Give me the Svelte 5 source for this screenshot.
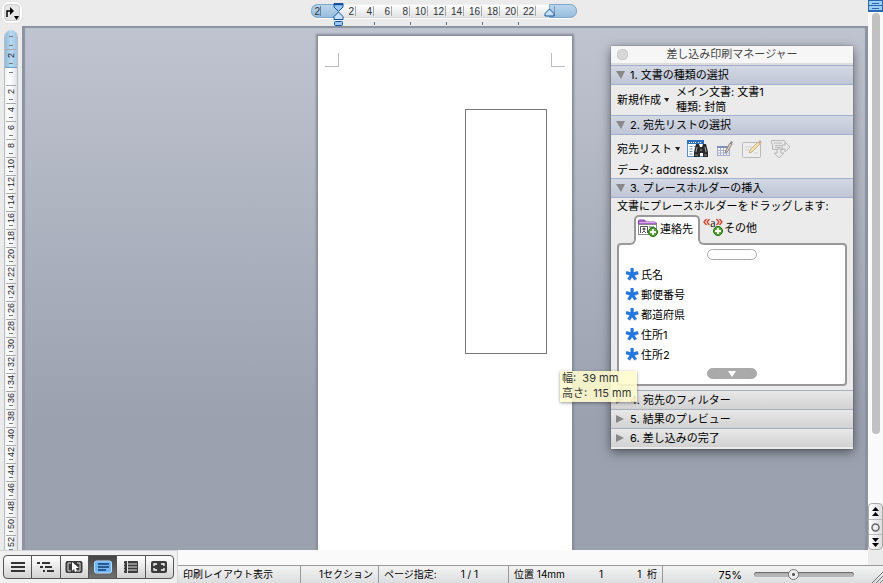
<script>
  const columns = [2, 4, 6, 8, 10, 12, 14, 16, 18, 20, 22];
  const tabStops = [4, 8, 12, 16, 20];
  const lines = Array.from({ length: 26 }, (_, i) => (i + 1) * 2);
  const fields = ["氏名", "郵便番号", "都道府県", "住所1", "住所2"];
  const closedSteps = ["4. 宛先のフィルター", "5. 結果のプレビュー", "6. 差し込みの完了"];

  let zoom = $state(38);
  let view = $state("print");
</script>

{#snippet plus()}
  <circle cx="15" cy="14" r="4.500" fill="#4fa92f" stroke="#246b12" />
  <path d="M15 11v6M12 14h6" stroke="#fff" stroke-width="2" />
{/snippet}

<div class="window">
  <div class="upper">
    <div class="workspace">
      <header class="top-bar">
        <button class="tab-button" aria-label="タブ">
          <svg width="16" height="16" viewBox="0 0 16 16">
            <path d="M3 12V6h4" fill="none" stroke="#000" stroke-width="1.5" />
            <path d="M6 2l4 4-4 4z" />
            <path d="M10 11h5l-2.5 4z" />
          </svg>
        </button>
        <div class="ruler-area">
          <div class="ruler">
            <div class="margin-left"><span>2</span></div>
            {#each columns as n}
              <div class="col">
                <span>{n}</span>
                {#if tabStops.includes(n - 2)}<i></i>{/if}
              </div>
            {/each}
            <div class="col-rest"></div>
            <div class="margin-right"><i></i></div>
            <svg class="indent" width="11" height="23" viewBox="0 0 11 23">
              <g fill="#9cc8f5" stroke="#17509c">
                <path d="M1 .5h9v3.500L5.500 8.500 1 4z" />
                <path d="M5.500 9L10 13.500v3H1v-3z" fill="#c5e0fa" />
                <rect x="1.500" y="18.500" width="8" height="4" rx="1" />
              </g>
              <path d="M1 1.500h9" stroke="#17509c" stroke-width="1.500" />
            </svg>
            <svg class="indent-right" width="11" height="9" viewBox="0 0 11 9">
              <path d="M5.500 1L10 5.500v2.500H1V5.500z" fill="#c5e0fa" stroke="#17509c" />
            </svg>
          </div>
        </div>
      </header>

      <div class="body">
        <div class="vruler">
          <div class="vtrack">
            <div class="vmargin">
              <b></b><b></b>
              <div class="row"><span>2</span><b></b></div>
            </div>
            <div class="vgap"><b></b></div>
            {#each lines as n}
              <div class="row"><span>{n}</span><b></b></div>
            {/each}
          </div>
        </div>

        <main class="canvas">
          <div class="page">
            <div class="corner left"></div>
            <div class="corner right"></div>
            <div class="text-box"></div>
          </div>

          <section class="panel">
            <div class="title">
              <button class="close" aria-label="閉じる"></button>
              <span>差し込み印刷マネージャー</span>
            </div>

            <button class="step open">1. 文書の種類の選択</button>
            <div class="doc-type">
              <button class="menu">新規作成<i></i></button>
              <p>メイン文書: 文書1<br />種類: 封筒</p>
            </div>

            <button class="step open">2. 宛先リストの選択</button>
            <div class="recipients">
              <div class="tools">
                <button class="menu">宛先リスト<i></i></button>
                <button aria-label="リストを開く">
                  <svg width="22" height="20" viewBox="0 0 22 20">
                    <rect x=".5" y="1.500" width="16" height="16" fill="#fff" stroke="#5b8fc4" />
                    <path d="M0 1h17v4H0z" fill="#2c70bd" />
                    <path d="M2 3.500h3M6 3.500h3M11 3.500h4" stroke="#fff" stroke-dasharray="1 1" />
                    <path d="M2.500 7.500h3M2.500 10h3M2.500 12.500h3M2.500 15h3M7 7.500h2" stroke="#5a9bd2" />
                    <path d="M9 5h3l1 3h2l1-3h3l2 8v5h-5v-4h-3v4H7v-5z" fill="#2a2a2a" />
                    <path d="M10 8l-1 5M18 8l1 5M13 11h2" stroke="#a0a0a0" />
                    <path d="M8 16h3M17 16h3" stroke="#888" />
                  </svg>
                </button>
                <button aria-label="データの編集">
                  <svg width="18" height="18" viewBox="0 0 18 18">
                    <rect x="1.500" y="6.500" width="12" height="9" fill="#f5f6f9" stroke="#a3abc4" />
                    <path d="M1 6h13v2H1z" fill="#8290b7" />
                    <path d="M4.500 8v8M7.500 8v8M10.500 8v8M1 10.500h13M1 13h13" stroke="#a9b2cc" />
                    <path d="M9 13l1-3 4-7 2 1-4 7z" fill="#e0d3b8" stroke="#8b8780" />
                    <path d="M14 3l1-2 2 1-1 2z" fill="#888" />
                  </svg>
                </button>
                <button aria-label="レコードの編集">
                  <svg width="22" height="20" viewBox="0 0 22 20">
                    <rect x="1.500" y="3.500" width="18" height="15" rx="1" fill="#eee" stroke="#b9b9b9" />
                    <path d="M4 8h7M4 11h4M13 14h4" stroke="#d2d2d2" />
                    <path d="M8 14l1-3 8-8 2 2-8 8z" fill="#f2dcae" stroke="#c9b48b" />
                    <path d="M17 3l2-2 2 2-2 2z" fill="#c9afa9" />
                  </svg>
                </button>
                <button aria-label="差し込み先">
                  <svg width="21" height="20" viewBox="0 0 21 20" fill="#e8e8e8" stroke="#b8b8b8">
                    <path d="M1.500 1.500h13q2 2 0 4v5h-12v-5q-2-2-1-4z" />
                    <path d="M4 4h8M5 6.500h6M5 8.500h6" />
                    <path d="M12 6h3V3l5 5-5 5v-3h-3z" />
                    <path d="M7 10h4v4h3l-5 5-5-5h3z" />
                  </svg>
                </button>
              </div>
              <p>データ: address2.xlsx</p>
            </div>

            <button class="step open">3. プレースホルダーの挿入</button>
            <div class="placeholders">
              <p>文書にプレースホルダーをドラッグします:</p>
              <div class="tabs">
                <button class="active">
                  <svg width="21" height="20" viewBox="0 0 21 20">
                    <path d="M.5 7V3q0-1 1-1h5l2 2h8q2 0 2 2v1z" fill="#a964cc" stroke="#8d45ad" />
                    <rect x=".5" y="6.500" width="18" height="10" fill="#fff" stroke="#8a8a8a" />
                    <path d="M1.500 4.500h16" stroke="#d9b0ee" />
                    <path d="M2.500 15V8.500h7V15M4 15l2-2 2 2M11 9h5M11 11.500h3" fill="none" stroke="#555" />
                    <circle cx="6" cy="11" r="1.500" fill="#555" />
                    {@render plus()}
                  </svg>
                  連絡先
                </button>
                <button>
                  <svg width="21" height="20" viewBox="0 0 21 20">
                    <path d="M3.500 2L1 5l2.500 3M6.500 2L4 5l2.500 3M13.500 2L16 5l-2.500 3M16.500 2L19 5l-2.500 3" fill="none" stroke="#d4432a" stroke-width="1.300" />
                    {@render plus()}
                  </svg>
                  <em>a</em>
                  その他
                </button>
              </div>
              <div class="list">
                <button class="pill" aria-label="上へ"></button>
                <ul>
                  {#each fields as field}
                    <li>
                      <svg width="14" height="14" viewBox="0 0 14 14">
                        <path d="M7.500 8V2M7.500 8l6-2M7.500 8l3.500 5M7.500 8L4 13M7.500 8L2 6" stroke="#b9bcc3" stroke-width="3" />
                        <path d="M7 7.500V1M7 7.500l6-2M7 7.500l3.500 5M7 7.500l-3.500 5M7 7.500l-6-2" stroke="#2377e2" stroke-width="3" />
                      </svg>
                      {field}
                    </li>
                  {/each}
                </ul>
                <button class="pill down" aria-label="下へ"></button>
              </div>
            </div>

            {#each closedSteps as step}
              <button class="step">{step}</button>
            {/each}
          </section>

          <div class="size-tip">幅:&nbsp; 39 mm<br />高さ:&nbsp; 115 mm</div>
        </main>
      </div>
    </div>

    <div class="scroll">
      <button class="split" aria-label="分割"><i></i><i></i></button>
      <div class="track"><div class="thumb"></div></div>
      <div class="browse">
        <button aria-label="前のページ">
          <svg width="9" height="10" viewBox="0 0 9 10"><path d="M4.500 0L8 4H1zM4.500 5L8 9H1z" /></svg>
        </button>
        <button aria-label="オブジェクトの選択">
          <svg width="9" height="9" viewBox="0 0 9 9"><circle cx="4.500" cy="4.500" r="3.500" fill="#eee" stroke="#666" stroke-width="1.500" /></svg>
        </button>
        <button aria-label="次のページ">
          <svg width="9" height="10" viewBox="0 0 9 10"><path d="M1 1h7L4.500 5zM1 6h7l-3.500 4z" /></svg>
        </button>
      </div>
    </div>
  </div>

  <footer>
    <div class="views">
      <div class="group">
        <button aria-label="下書き" class:on={view === "draft"} onclick={() => (view = "draft")}>
          <svg width="16" height="14" viewBox="0 0 16 14"><path d="M1 3h14M1 7h14M1 11h14" stroke="#333" stroke-width="2" /></svg>
        </button>
        <button aria-label="アウトライン" class:on={view === "outline"} onclick={() => (view = "outline")}>
          <svg width="18" height="14" viewBox="0 0 18 14"><path d="M0 3h3M5 3h8M3 7h3M8 7h7M6 11h2M10 11h7" stroke="#333" stroke-width="2" /></svg>
        </button>
        <button aria-label="パブリッシング" class:on={view === "publish"} onclick={() => (view = "publish")}>
          <svg width="18" height="14" viewBox="0 0 18 14">
            <rect x=".5" y="1" width="17" height="12" rx="2" fill="#3b3b3b" />
            <path d="M6 3H3v8h3M12 3h3v8h-3" fill="none" stroke="#ddd" />
            <path d="M7 2v9l2-2 1 3 2-1-1-3h3z" fill="#fff" />
          </svg>
        </button>
        <button aria-label="印刷レイアウト" class:on={view === "print"} onclick={() => (view = "print")}>
          <svg width="18" height="14" viewBox="0 0 18 14">
            <rect x=".5" y="1" width="17" height="12" rx="2" fill="#6eb4f7" stroke="#b8dcff" />
            <path d="M4 4h11M4 7h11M4 10h8" stroke="#163a6b" stroke-width="1.400" />
          </svg>
        </button>
        <button aria-label="ノートブック" class:on={view === "notebook"} onclick={() => (view = "notebook")}>
          <svg width="16" height="14" viewBox="0 0 16 14">
            <rect x="1" y="1" width="14" height="12" rx="1" fill="#3b3b3b" />
            <path d="M5 4h9M5 7h9M5 10h9M4.500 1v12M0 4h2M0 7h2M0 10h2" stroke="#e5e5e5" />
          </svg>
        </button>
        <button aria-label="全画面表示" class:on={view === "full"} onclick={() => (view = "full")}>
          <svg width="18" height="14" viewBox="0 0 18 14">
            <rect x="1" y="1" width="16" height="12" rx="2" fill="#3b3b3b" />
            <path d="M4 6V4h3M11 4h3v2M14 8v2h-3M7 10H4V8" fill="none" stroke="#fff" stroke-width="1.300" />
          </svg>
        </button>
      </div>
    </div>
    <div class="bottom">
      <div class="hscroll"><div></div></div>
      <div class="status">
        <div class="mode">印刷レイアウト表示</div>
        <div class="section">1セクション</div>
        <div class="pages"><span>ページ指定:</span><span>1 / 1</span></div>
        <div class="position"><span>位置 14mm</span><span>1</span><span>1&nbsp; 桁</span></div>
        <div class="zoom">
          <label for="zoom">75%</label>
          <input id="zoom" type="range" min="0" max="100" bind:value={zoom} />
          <svg class="grip" width="12" height="12" viewBox="0 0 12 12"><path d="M1 12L12 1M5 12l7-7M9 12l3-3" stroke="#777" /></svg>
        </div>
      </div>
    </div>
  </footer>
</div>

<style>
  :global(body) {
    margin: 0;
  }

  .window {
    height: 100vh;
    display: flex;
    flex-direction: column;
    overflow: hidden;
    background: #ebebeb;
    color: #000;
    font-family: Inter, "Noto Sans CJK JP", sans-serif;
    font-size: 11px;
  }

  button {
    display: flex;
    align-items: center;
    border: 0;
    padding: 0;
    background: none;
    color: inherit;
    font: inherit;
  }

  svg {
    flex: none;
  }

  p {
    margin: 0;
  }

  .upper,
  .body {
    flex: 1;
    display: flex;
    min-height: 0;
  }

  .workspace {
    flex: 1;
    display: flex;
    flex-direction: column;
    min-width: 0;
  }

  /* TOP RULER */
  .top-bar {
    height: 26px;
    display: flex;
  }

  .tab-button {
    box-sizing: border-box;
    width: 20px;
    height: 21px;
    margin: 2px 0 0 2px;
    border: 2px solid #fff;
    border-radius: 6px;
    background: #e8e8e8;
    box-shadow: 0 0 1px #bbb, inset 0 0 2px #999;
  }

  .ruler-area {
    flex: 1;
    display: flex;
    justify-content: center;
    padding: 4px 2px 0 0;
  }

  .ruler {
    position: relative;
    display: flex;
    width: 266px;
    height: 14px;
    border-radius: 7px;
    background: linear-gradient(#fff, #dfe1e3);
    box-shadow: 0 1px 0 #fff, inset 0 0 1px #777;
    font-family: "Liberation Sans", sans-serif;
    font-size: 10px;
    color: #333;
  }

  .margin-left,
  .margin-right {
    box-sizing: border-box;
    padding-top: 1px;
    background: linear-gradient(#b9d7ee, #98bddd);
    border: 1px solid #7fa8cb;
  }

  .margin-left {
    width: 27px;
    border-radius: 7px 0 0 7px;
    border-right: 0;
  }

  .margin-left span {
    display: block;
    width: 8px;
    height: 10px;
    border-right: 1px solid #6c8398;
    text-align: right;
    line-height: 11px;
  }

  .margin-right {
    width: 28px;
    border-radius: 0 7px 7px 0;
  }

  .margin-right i {
    display: block;
    width: 4px;
    height: 10px;
    border-right: 1px solid #7c93a8;
  }

  .col {
    position: relative;
    width: 18px;
    text-align: right;
  }

  .col span {
    display: block;
    height: 10px;
    margin-top: 2px;
    padding-right: 1px;
    border-right: 1px solid #aaa;
    line-height: 11px;
  }

  .col i {
    position: absolute;
    left: 0;
    top: 18px;
    width: 1px;
    height: 3px;
    background: #5a7088;
  }

  .col-rest {
    flex: 1;
  }

  .indent {
    position: absolute;
    left: 22px;
    top: -1px;
  }

  .indent-right {
    position: absolute;
    right: 22px;
    top: 4px;
  }

  /* LEFT RULER */
  .vruler {
    width: 22px;
    display: flex;
    padding-top: 4px;
    box-sizing: border-box;
    overflow: hidden;
  }

  .vtrack {
    box-sizing: border-box;
    width: 14px;
    margin-left: 4px;
    border: solid #b9bdc3;
    border-width: 0 1px;
    border-radius: 7px 7px 0 0;
    background: linear-gradient(90deg, #f0f2f5, #fff 40%, #dfe2e6);
    overflow: hidden;
    font-family: "Liberation Sans", sans-serif;
    font-size: 9px;
    line-height: 10px;
    color: #222;
  }

  .vtrack b {
    display: block;
    width: 4px;
    height: 1px;
    margin: 0 auto;
    background: #777;
  }

  .vmargin {
    height: 38px;
    box-sizing: border-box;
    padding-top: 6px;
    border-bottom: 1px solid #6f9dc4;
    background: linear-gradient(90deg, #8fbadc, #b9d9f0 50%, #9fc4e2);
  }

  .vmargin > b {
    margin-bottom: 8px;
  }

  .vmargin > b + b {
    margin-bottom: 3px;
  }

  .vgap {
    height: 17px;
    box-sizing: border-box;
    padding-top: 4px;
  }

  .row {
    box-sizing: border-box;
    display: flex;
    flex-direction: column;
    align-items: center;
    justify-content: space-between;
    height: 18px;
    margin: 0 1px;
    padding-bottom: 3px;
    border-top: 1px solid #aaa;
  }

  .row span {
    display: flex;
    align-items: center;
    justify-content: center;
    min-height: 11px;
    writing-mode: vertical-rl;
    transform: rotate(180deg);
  }

  /* DOCUMENT */
  .canvas {
    position: relative;
    flex: 1;
    display: flex;
    justify-content: center;
    padding-top: 10px;
    min-width: 0;
    background: linear-gradient(#c0c4d0, #9ba1af 75%);
    box-shadow: inset 3px 2px 1px #8c93a0, inset -3px 0 1px #8c93a0;
    overflow: hidden;
  }

  .page {
    position: relative;
    box-sizing: border-box;
    display: flex;
    justify-content: space-between;
    width: 254px;
    padding: 17px 7px 0;
    background: #fff;
    box-shadow: 0 0 2px 2px #858b98;
  }

  .corner {
    box-sizing: border-box;
    width: 14px;
    height: 14px;
    border: 0 solid #bbb;
    border-bottom-width: 1px;
  }

  .corner.left {
    border-right-width: 1px;
  }

  .corner.right {
    border-left-width: 1px;
  }

  .text-box {
    position: absolute;
    left: 147px;
    top: 73px;
    width: 80px;
    height: 243px;
    border: 1px solid #777;
  }

  .size-tip {
    position: absolute;
    left: 538px;
    top: 345px;
    padding: 0 6px 1px 2px;
    background: rgba(255, 252, 205, 0.88);
    box-shadow: 0 1px 3px rgba(0, 0, 0, 0.4);
    line-height: 15px;
    color: #333;
    white-space: nowrap;
  }

  /* PANEL */
  .panel {
    position: absolute;
    right: 15px;
    top: 20px;
    width: 242px;
    padding-bottom: 2px;
    background: #ebebeb;
    box-shadow: 0 3px 10px rgba(0, 0, 0, 0.5), 0 0 1px #555;
  }

  .title {
    box-sizing: border-box;
    display: flex;
    align-items: center;
    height: 19px;
    padding: 0 17px 0 6px;
    border-bottom: 2px solid #ddd;
    background: #f6f6f6;
    color: #444;
  }

  .title span {
    flex: 1;
    text-align: center;
    line-height: 17px;
  }

  .close {
    width: 11px;
    height: 11px;
    border-radius: 50%;
    background: #d8d8d8;
    box-shadow: inset 0 0 1px #888;
  }

  .step {
    box-sizing: border-box;
    width: 100%;
    height: 19px;
    padding-left: 5px;
    border-top: 1px solid #aab0bb;
    background: linear-gradient(#e8e8e8, #d2d2d2);
    line-height: 17px;
  }

  .step::before {
    content: "";
    width: 0;
    margin-right: 6px;
    border: solid transparent;
    border-width: 4px 0 4px 8px;
    border-left-color: #888;
  }

  .step.open {
    height: 20px;
    border-top-color: #a3aecf;
    border-bottom: 1px solid #a3aecf;
    background: linear-gradient(#d3d8e4, #c0c6d6);
  }

  .step.open::before {
    margin-right: 5px;
    border-width: 8px 4px 0 5px;
    border-color: #888 transparent transparent;
  }

  .menu i {
    margin-left: 3px;
    border: solid transparent;
    border-width: 4px 2px 0 3px;
    border-top-color: #222;
  }

  .doc-type {
    display: flex;
    gap: 7px;
    padding-left: 6px;
    line-height: 15px;
  }

  .recipients {
    padding-left: 6px;
    line-height: 15px;
  }

  .tools {
    display: flex;
    align-items: center;
    gap: 7px;
    height: 28px;
  }

  .placeholders {
    padding: 0 6px 4px;
  }

  .placeholders > p {
    line-height: 17px;
    white-space: nowrap;
  }

  .tabs {
    display: flex;
    height: 28px;
    padding-left: 17px;
  }

  .tabs button {
    gap: 1px;
    padding: 0 3px 4px;
    white-space: nowrap;
  }

  .tabs em {
    align-self: flex-start;
    width: 6px;
    margin: 2px 7px 0 -15px;
    font: 12px/12px "Liberation Serif", serif;
    color: #222;
  }

  .tabs .active {
    position: relative;
    box-sizing: border-box;
    height: 30px;
    padding: 0 5px 6px 2px;
    border: solid #999;
    border-width: 2px 2px 0;
    border-radius: 5px 5px 0 0;
    background: #fff;
  }

  .active::before,
  .active::after {
    content: "";
    position: absolute;
    bottom: 0;
    width: 6px;
    height: 6px;
    border: 0 solid #999;
    border-bottom-width: 2px;
    background: #ebebeb;
  }

  .active::before {
    right: 100%;
    border-right-width: 2px;
    border-bottom-right-radius: 6px;
    box-shadow: 2px 1px 0 #fff;
  }

  .active::after {
    left: 100%;
    border-left-width: 2px;
    border-bottom-left-radius: 6px;
    box-shadow: -2px 1px 0 #fff;
  }

  .list {
    box-sizing: border-box;
    display: flex;
    flex-direction: column;
    align-items: center;
    padding: 4px 6px 5px;
    border: 2px solid #999;
    border-radius: 4px;
    background: #fff;
  }

  .pill {
    box-sizing: border-box;
    justify-content: center;
    width: 50px;
    height: 11px;
    border: 1px solid #aaa;
    border-radius: 6px;
  }

  .pill.down {
    background: #aaa;
  }

  .pill.down::after {
    content: "";
    border: solid transparent;
    border-width: 6px 4px 0;
    border-top-color: #fff;
  }

  ul {
    align-self: stretch;
    margin: 4px 0;
    padding: 0;
    list-style: none;
  }

  li {
    display: flex;
    align-items: center;
    gap: 2px;
    height: 20px;
  }

  /* SCROLL */
  .scroll {
    width: 15px;
    display: flex;
    flex-direction: column;
    background: #fafafa;
  }

  .split {
    box-sizing: border-box;
    height: 12px;
    flex-direction: column;
    align-items: stretch;
    border: 1px solid #2a67b0;
    background: #9ccdf5;
  }

  .split i {
    flex: 1;
    border-bottom: 1px solid #2a67b0;
    background: linear-gradient(#2a67b0, #2a67b0) center / 7px 1px no-repeat;
  }

  .track {
    flex: 1;
    padding: 1px 3px 0 4px;
  }

  .thumb {
    height: 86%;
    border-radius: 4px;
    background: #c1c1c1;
  }

  .browse {
    border: 1px solid #aaa;
    border-radius: 4px;
    background: linear-gradient(90deg, #fff, #ddd);
  }

  .browse button {
    justify-content: center;
    width: 100%;
    height: 15px;
  }

  .browse button + button {
    border-top: 1px solid #bbb;
  }

  /* FOOTER */
  footer {
    display: flex;
    height: 33px;
  }

  .views {
    box-sizing: border-box;
    width: 178px;
    padding: 4px 0 0 3px;
    border: solid #d5d5d5;
    border-width: 1px 1px 0 0;
    background: #f0f0f0;
  }

  .group {
    box-sizing: border-box;
    display: flex;
    width: 171px;
    height: 24px;
    border: 1px solid #555;
    border-radius: 4px;
    background: linear-gradient(#fff, #d2d2d2);
    overflow: hidden;
  }

  .group button {
    flex: 1;
    justify-content: center;
  }

  .group button + button {
    border-left: 1px solid #555;
  }

  .group .on {
    background: linear-gradient(#444, #707070);
  }

  .bottom {
    flex: 1;
    display: flex;
    flex-direction: column;
    min-width: 0;
  }

  .hscroll {
    display: flex;
    height: 15px;
    padding-right: 15px;
  }

  .hscroll div {
    flex: 1;
    background: #fafafa;
  }

  .status {
    flex: 1;
    display: flex;
    border-top: 1px solid #999;
    background: linear-gradient(#f4f4f4, #dcdddf);
    font-size: 10px;
    line-height: 16px;
    white-space: nowrap;
  }

  .status > div {
    box-sizing: border-box;
    display: flex;
    padding: 0 5px;
  }

  .status > div + div {
    border-left: 1px solid #999;
  }

  .status .mode {
    width: 122px;
  }

  .status .section {
    width: 78px;
    justify-content: flex-end;
  }

  .status .pages {
    width: 130px;
    gap: 24px;
  }

  .status .position {
    width: 154px;
    justify-content: space-between;
  }

  .status .zoom {
    flex: 1;
    align-items: center;
    justify-content: flex-end;
    gap: 12px;
    padding: 0;
    font-size: 11px;
  }

  .zoom input {
    width: 100px;
    height: 12px;
    margin: 0;
    appearance: none;
    background: none;
  }

  .zoom input::-webkit-slider-runnable-track {
    height: 5px;
    border-radius: 3px;
    background: #b5b5b5;
    box-shadow: inset 0 1px 1px #666;
  }

  .zoom input::-webkit-slider-thumb {
    appearance: none;
    width: 11px;
    height: 11px;
    margin-top: -3px;
    border: 1px solid #777;
    border-radius: 50%;
    background: radial-gradient(#555 0 1px, #eee 2px);
  }

  .grip {
    align-self: flex-end;
    margin-left: 5px;
  }
</style>
